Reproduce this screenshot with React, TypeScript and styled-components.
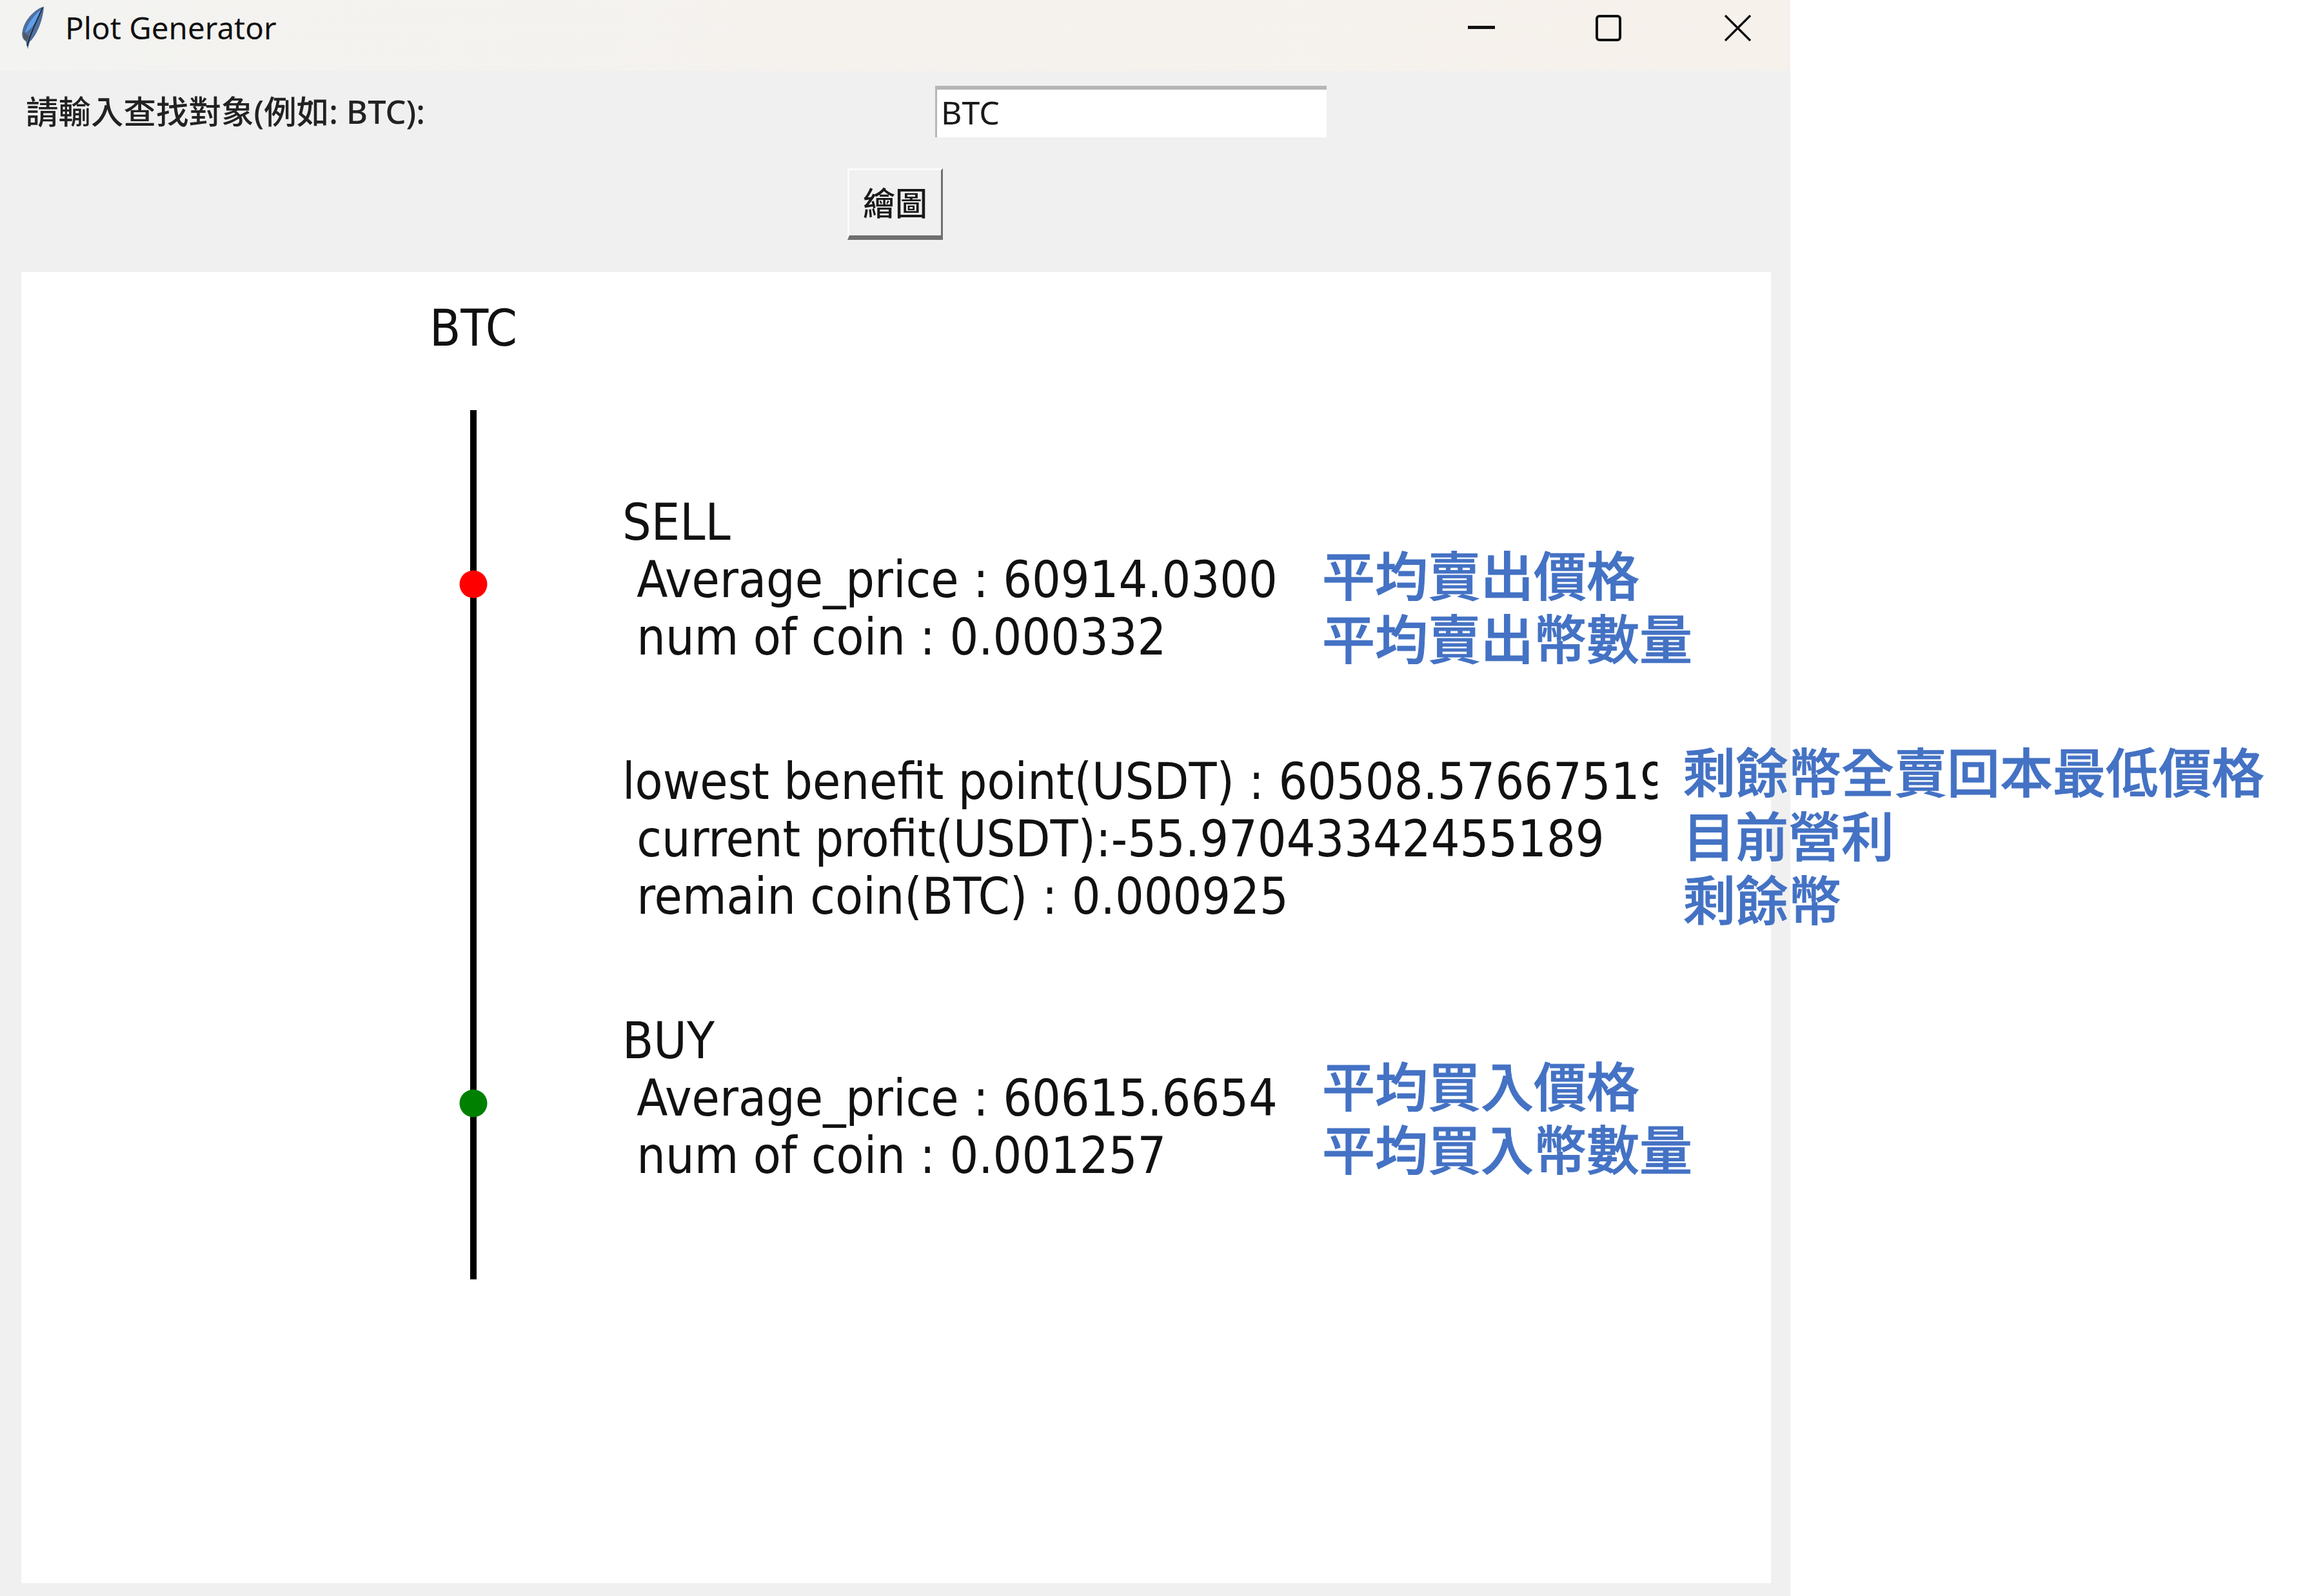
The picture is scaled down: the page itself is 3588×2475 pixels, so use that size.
import React from 'react'
import styled, { createGlobalStyle } from 'styled-components'

const GlobalS = createGlobalStyle`
  html, body {
    margin: 0;
    padding: 0;
    background: #ffffff;
  }
`;

const WindowS = styled.div`
  display: flex;
  flex-direction: column;
  width: 2776px;
  height: 2475px;
  background: #f0f0f0;
  font-family: "Noto Sans", "Noto Sans CJK TC", sans-serif;
  color: #1a1a1a;
`;

const TitleBar = styled.header`
  display: flex;
  align-items: center;
  height: 110px;
  padding: 0 61px 24px 33px;
  box-sizing: border-box;
  background: linear-gradient(90deg, #f3f3f1 0%, #f5f2ee 45%, #f6f1eb 100%);
`;

const TitleText = styled.span`
  flex: 1;
  margin-left: 32px;
  font-size: 47.5px;
  line-height: 60px;
  color: #111111;
`;

const Controls = styled.div`
  display: flex;
  align-items: center;
`;

const ControlIcon = styled.svg<{ $left: number }>`
  display: block;
  margin-left: ${(p) => p.$left}px;
`;

const FormRow = styled.div`
  display: flex;
  align-items: center;
  height: 80px;
  margin-top: 23px;
  padding-left: 40px;
`;

const FieldLabel = styled.label`
  width: 1410px;
  font-size: 50.5px;
  font-weight: 500;
  line-height: 60px;
  color: #222222;
`;

const FieldInput = styled.input`
  width: 607px;
  height: 80px;
  box-sizing: border-box;
  padding: 0 0 4px 6px;
  border: 0;
  border-top: 6px solid #b6b6b6;
  border-left: 3px solid #b6b6b6;
  border-radius: 0;
  outline: none;
  background: #ffffff;
  font-family: inherit;
  font-size: 50px;
  color: #1a1a1a;
`;

const PlotButton = styled.button`
  align-self: center;
  width: 148px;
  height: 111px;
  margin-top: 48px;
  padding: 0 0 4px;
  box-sizing: border-box;
  border-style: solid;
  border-width: 3px 3px 7px 3px;
  border-color: #fbfbfb #6f6f6f #6f6f6f #fbfbfb;
  background: #f0f0f0;
  font-family: inherit;
  font-size: 50px;
  font-weight: 500;
  color: #1a1a1a;
`;

const Canvas = styled.main`
  display: flex;
  align-items: flex-start;
  height: 2033px;
  margin: 50px 30px 0 33px;
  background: #ffffff;
  font-family: "DejaVu Sans", sans-serif;
  font-stretch: condensed;
  font-size: 78.3px;
  line-height: 89.2px;
  color: #111111;
`;

const AxisColumn = styled.div`
  display: flex;
  flex: none;
  flex-direction: column;
  align-items: center;
  width: 400px;
  margin-left: 501px;
  padding-top: 42px;
`;

const PlotTitle = styled.div`
  height: 90px;
`;

const Timeline = styled.svg`
  display: block;
  width: 60px;
  height: 1348px;
  margin-top: 82px;
`;

const TradeColumn = styled.div`
  display: flex;
  flex: none;
  flex-direction: column;
  gap: 134px;
  margin-left: 31px;
  padding-top: 343px;
`;

const TradeRow = styled.section`
  display: flex;
  align-items: flex-start;
  height: 268px;
`;

const TradeText = styled.div<{ $width: number; $gap: number }>`
  flex: none;
  width: ${(p) => p.$width}px;
  margin-right: ${(p) => p.$gap}px;
  height: 268px;
  overflow: hidden;
  white-space: pre;
`;

const Note = styled.div<{ $top: number; $pitch: number }>`
  flex: none;
  margin-top: ${(p) => p.$top}px;
  font-family: "Noto Sans CJK TC", sans-serif;
  font-stretch: normal;
  font-size: 82px;
  font-weight: 500;
  -webkit-text-stroke: 1px #4472c4;
  line-height: ${(p) => p.$pitch}px;
  color: #4472c4;
  white-space: nowrap;
`;

const Feather = () => (
  <svg width="36" height="68" viewBox="0 0 36 68">
    <path d="M35 1 C22 5 6 20 2 38 C0 46 2 52 7 55 L10 67 L13 56 C24 46 34 22 35 1 Z" fill="#4f6f9c" />
    <path d="M32 5 C22 12 10 26 6 42 C14 38 26 22 32 5 Z" fill="#5f9fec" />
    <path d="M33 3 C25 20 16 38 9 62" fill="none" stroke="#1b2430" strokeWidth="1.6" />
    <path d="M3 40 C2 47 4 52 8 55 L12 48 Z" fill="#54585f" />
  </svg>
);

const MinIcon = () => (
  <ControlIcon $left={0} width="42" height="8" viewBox="0 0 42 8">
    <rect x="0" y="1" width="42" height="5" fill="#111111" />
  </ControlIcon>
);

const MaxIcon = () => (
  <ControlIcon $left={156} width="40" height="41" viewBox="0 0 40 41">
    <rect x="2" y="2" width="36" height="37" rx="4" fill="none" stroke="#111111" strokeWidth="4" />
  </ControlIcon>
);

const CloseIcon = () => (
  <ControlIcon $left={160} width="41" height="41" viewBox="0 0 41 41">
    <path d="M1 1 L40 40 M40 1 L1 40" fill="none" stroke="#111111" strokeWidth="3.4" />
  </ControlIcon>
);

export default function App() {
  return (
    <WindowS>
      <GlobalS />
      <TitleBar>
        <Feather />
        <TitleText>Plot Generator</TitleText>
        <Controls>
          <MinIcon />
          <MaxIcon />
          <CloseIcon />
        </Controls>
      </TitleBar>

      <FormRow>
        <FieldLabel htmlFor='target'>請輸入查找對象(例如: BTC):</FieldLabel>
        <FieldInput id='target' type='text' defaultValue='BTC' />
      </FormRow>
      <PlotButton type='button'>繪圖</PlotButton>

      <Canvas>
        <AxisColumn>
          <PlotTitle>BTC</PlotTitle>
          <Timeline viewBox="0 0 60 1348">
            <line x1="30" y1="0" x2="30" y2="1348" stroke="#000000" strokeWidth="10" />
            <circle cx="30" cy="270" r="21.5" fill="#ff0000" />
            <circle cx="30" cy="1075" r="21.5" fill="#008000" />
          </Timeline>
        </AxisColumn>

        <TradeColumn>
          <TradeRow>
            <TradeText $width={1085} $gap={0}>{'SELL\n Average_price : 60914.0300\n num of coin : 0.000332'}</TradeText>
            <Note $top={75} $pitch={98}>平均賣出價格<br />平均賣出幣數量</Note>
          </TradeRow>
          <TradeRow>
            <TradeText $width={1605} $gap={39}>{'lowest benefit point(USDT) : 60508.57667519\n current profit(USDT):-55.97043342455189\n remain coin(BTC) : 0.000925'}</TradeText>
            <Note $top={-23} $pitch={99}>剩餘幣全賣回本最低價格<br />目前營利<br />剩餘幣</Note>
          </TradeRow>
          <TradeRow>
            <TradeText $width={1085} $gap={0}>{'BUY\n Average_price : 60615.6654\n num of coin : 0.001257'}</TradeText>
            <Note $top={63} $pitch={98}>平均買入價格<br />平均買入幣數量</Note>
          </TradeRow>
        </TradeColumn>
      </Canvas>
    </WindowS>
  )
}
